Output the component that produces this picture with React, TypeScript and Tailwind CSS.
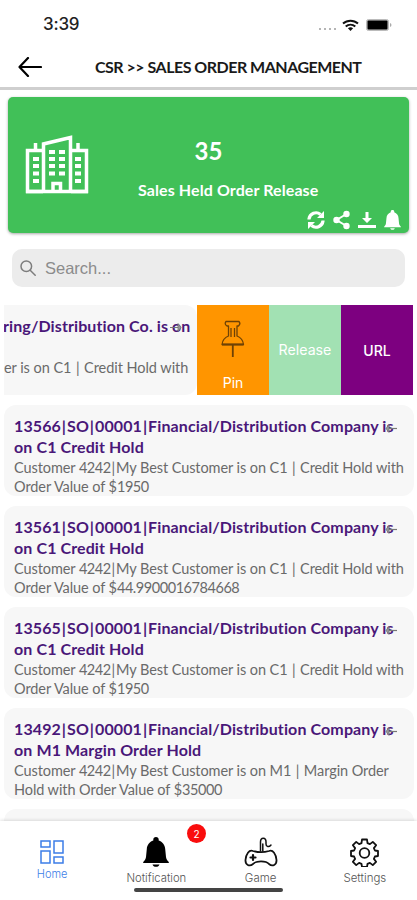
import { Fragment } from "react";

const orders = [
    {
        title: ["13566|SO|00001|Financial/Distribution Company is", "on C1 Credit Hold"],
        detail: ["Customer 4242|My Best Customer is on C1 | Credit Hold with", "Order Value of $1950"],
    },
    {
        title: ["13561|SO|00001|Financial/Distribution Company is", "on C1 Credit Hold"],
        detail: ["Customer 4242|My Best Customer is on C1 | Credit Hold with", "Order Value of $44.9900016784668"],
    },
    {
        title: ["13565|SO|00001|Financial/Distribution Company is", "on C1 Credit Hold"],
        detail: ["Customer 4242|My Best Customer is on C1 | Credit Hold with", "Order Value of $1950"],
    },
    {
        title: ["13492|SO|00001|Financial/Distribution Company is", "on M1 Margin Order Hold"],
        detail: ["Customer 4242|My Best Customer is on M1 | Margin Order", "Hold with Order Value of $35000"],
    },
];

// Pipes get a little air, long numbers are set tighter
function Line({ text }: { text: string }) {
    return (
        <>
            {text.split(/(\||\d[\d.]+)/).map((part, i) => {
                if (part === "|") return <span key={i} className="mx-[0.9px]">|</span>;
                if (/^\d/.test(part)) return <span key={i} className="tracking-[-0.45px]">{part}</span>;
                return <Fragment key={i}>{part}</Fragment>;
            })}
        </>
    );
}

function StatusBar() {
    return (
        <div className="flex h-[46px] shrink-0 items-center justify-between pl-[43px] pr-[25px] pt-[4px]">
            <span className="font-['Inter'] text-[17px] font-medium tracking-[-0.2px] text-[#222]">3:39</span>
            <div className="flex items-center">
                <div className="mr-[6px] mt-[8px] flex gap-[3px]">
                    {[0, 1, 2, 3].map((i) => (
                        <span key={i} className="size-[2px] bg-[#b5b5b5]" />
                    ))}
                </div>
                <svg width="17" height="13" viewBox="0 0 17 13" fill="none" stroke="#111" strokeWidth="2">
                    <path d="M1 4.6C5.3.7 11.7.7 16 4.6" />
                    <path d="M3.7 7.5c2.8-2.5 6.8-2.5 9.6 0" />
                    <path d="M5.9 9.2c1.5-1.3 3.7-1.3 5.2 0L8.5 12Z" fill="#111" stroke="none" />
                </svg>
                <svg className="ml-[7px]" width="26" height="12" viewBox="0 0 26 12">
                    <rect x=".5" y=".5" width="22" height="11" rx="2" fill="#ccc" stroke="#bbb" />
                    <rect x="1.5" y="1.5" width="20" height="9" rx="1" fill="#000" />
                    <path d="M24 4v4q1.5-.5 1.5-2T24 4Z" fill="#aaa" />
                </svg>
            </div>
        </div>
    );
}

function Header() {
    return (
        <header className="flex h-[44px] shrink-0 items-center border-b-[3px] border-[#cfcfcf] pl-[18px]">
            <svg width="24" height="20" viewBox="0 0 24 20" fill="none" stroke="#000" strokeWidth="2.2" strokeLinecap="round" strokeLinejoin="round">
                <path d="M10 1 1.5 10 10 19M1.5 10H23" />
            </svg>
            <h1 className="ml-[53px] pt-px whitespace-nowrap text-[16px] font-bold tracking-[-0.5px] text-[#1a1a1a]">
                CSR &gt;&gt; SALES ORDER MANAGEMENT
            </h1>
        </header>
    );
}

function BuildingIcon() {
    return (
        <svg width="64" height="60" viewBox="0 0 64 60" fill="none" stroke="#fff" strokeWidth="3.5">
            <path d="M18 56.5H2.5V15.5H18M46 15.5H61.5V56.5H46M10.5 15V8M53 15V8" />
            <path d="M18.5 57V9L45.5 2.5V57" />
            <path d="M1 56.5H63" />
            <path d="M28 57v-8.5h7.5V57" />
            <path d="M8 24h6M8 31h6M8 38.5h6M8 46h6M50 24h6M50 31h6M50 38.5h6M50 46h6M24 17h6M34 17h6M24 24h6M34 24h6M24 31h6M34 31h6M24 38.5h6M34 38.5h6" strokeWidth="4" />
        </svg>
    );
}

function SummaryCard() {
    return (
        <section className="relative mx-[8px] mt-[7px] h-[136px] shrink-0 rounded-[5px] bg-[#41c058] text-white shadow-[0_1px_3px_rgba(0,0,0,0.35)]">
            <div className="flex">
                <div className="ml-[17px] mt-[38px]">
                    <BuildingIcon />
                </div>
                <div className="ml-[49px] w-[182px]">
                    <p className="mt-[39px] pr-[41px] text-center text-[24px] leading-[30px] font-bold">35</p>
                    <p className="mt-[13px] whitespace-nowrap text-[16px] leading-[22px] font-bold tracking-[0.1px]">Sales Held Order Release</p>
                </div>
            </div>
            <div className="absolute right-[8px] bottom-[3px] flex items-center gap-[8px]">
                <svg width="18" height="20" viewBox="0 0 18 20" fill="none" stroke="#fff" strokeWidth="3.2">
                    <path d="M2 9.5V9a7 7 0 0 1 11.5-4.5M16 10.5v.5a7 7 0 0 1-11.5 4.5" />
                    <path d="M17 1v7h-7ZM1 19v-7h7Z" fill="#fff" stroke="none" />
                </svg>
                <svg width="17" height="20" viewBox="0 0 17 20" fill="#fff" stroke="#fff" strokeWidth="2">
                    <path d="M13.5 4 3.5 10l10 6" fill="none" />
                    <circle cx="13.5" cy="4" r="2.2" />
                    <circle cx="3.5" cy="10" r="2.2" />
                    <circle cx="13.5" cy="16" r="2.2" />
                </svg>
                <svg width="18" height="20" viewBox="0 0 18 20" fill="#fff">
                    <path d="M7.5 2h3v6H14l-5 5-5-5h3.5ZM0 15h18v3H0Z" />
                </svg>
                <BellIcon className="h-[20px] w-[17px]" />
            </div>
        </section>
    );
}

function BellIcon({ className }: { className: string }) {
    return (
        <svg className={className} viewBox="0 0 26 30" fill="currentColor" preserveAspectRatio="none">
            <path d="M13 0c-1.7 0-2.7 1-2.7 2.5v1C6.5 4.8 4 8 3.8 12l-.8 8c-.2 2-1 3.2-2.8 5v1h25.6v-1c-1.800-1.800-2.600-3-2.800-5l-.8-8c-.2-4-2.700-7.200-6.500-8.500v-1C15.700 1 14.700 0 13 0ZM9.500 27.500h7c-.5 1.700-1.700 2.300-3.500 2.300s-3-.6-3.500-2.300Z" />
        </svg>
    );
}

function SearchBar() {
    return (
        <div className="mx-[12px] mt-[16px] flex h-[38px] shrink-0 items-center rounded-[10px] bg-[#ececec] pl-[8px]">
            <svg width="16" height="16" viewBox="0 0 16 16" fill="none" stroke="#7d7d7d" strokeWidth="1.5" strokeLinecap="round">
                <circle cx="6.3" cy="6.3" r="5.3" />
                <path d="m10.2 10.2 5 5" />
            </svg>
            <span className="ml-[9px] font-['Liberation_Sans'] text-[16.5px] text-[#8b8b8b]">Search...</span>
        </div>
    );
}

function SwipedRow() {
    return (
        <div className="ml-[4px] mt-[18px] flex h-[90px] w-[410px] shrink-0">
            <div className="relative w-[193px] overflow-hidden rounded-r-[12px] bg-[#f7f7f7] whitespace-nowrap">
                <p className="mt-[10px] -ml-px text-[16px] leading-[21px] font-bold tracking-[0.1px] text-[#4a1779]">ring/Distribution Co. is on</p>
                <p className="mt-[22px] text-[14.5px] leading-[19px] tracking-[-0.05px] text-[#6a6a6a]">
                    <Line text="er is on C1 | Credit Hold with" />
                </p>
                <ArrowMark className="absolute top-[17px] right-[13px] -scale-x-100" />
            </div>
            <button className="flex w-[72px] flex-col items-center bg-[#ff9500] pt-[15px] font-['Inter'] text-[14px] leading-[18px] text-white">
                <svg width="24" height="39" viewBox="0 0 24 39" fill="none" stroke="#6e4205" strokeWidth="1.3" strokeLinejoin="round">
                    <path d="M5 1.5h13q2 2.3-.5 4.5H16v10c4 1.5 6 4 6.500 8.500H1C1.500 20 3.500 17.500 7.500 16V6H6q-3-2.200-1-4.500ZM10 8v9M13.500 8v9" />
                    <path d="M1 24.5h21.5M11.8 24.5V37" strokeWidth="1.8" />
                </svg>
                <span className="mt-[15px]">Pin</span>
            </button>
            <button className="w-[72px] bg-[#a2e1b3] font-['Inter'] text-[14.2px] text-white">Release</button>
            <button className="w-[72px] bg-[#7d0080] font-['Inter'] text-[14px] font-medium text-white">URL</button>
        </div>
    );
}

function ArrowMark({ className }: { className: string }) {
    return (
        <svg className={className} width="14" height="11" viewBox="0 0 14 11" fill="none" stroke="#777" strokeWidth="1.2">
            <path d="M14 5.5H3" />
            <path d="M6 1.5v8L3 5.5Z" fill="#999" strokeWidth=".8" />
        </svg>
    );
}

function OrderCard({ title, detail }: { title: string[]; detail: string[] }) {
    return (
        <article className="relative h-[91px] w-[410px] shrink-0 rounded-[12px] bg-[#f7f7f7] pt-[10px] pl-[10px] whitespace-nowrap">
            <h2 className="text-[16px] leading-[21px] font-bold tracking-[0.11px] text-[#4a1779]">
                {title.map((line) => (
                    <span key={line} className="block">
                        {line.split("|").map((part, i) => (
                            <Fragment key={i}>
                                {i > 0 && <span className="mx-[0.9px]">|</span>}
                                {part}
                            </Fragment>
                        ))}
                    </span>
                ))}
            </h2>
            <p className="pt-px text-[14.5px] leading-[19px] tracking-[-0.08px] text-[#6a6a6a]">
                {detail.map((line) => (
                    <span key={line} className="block"><Line text={line} /></span>
                ))}
            </p>
            <ArrowMark className="absolute top-[18px] right-[17px]" />
        </article>
    );
}

function TabBar() {
    return (
        <nav className="relative h-[79px] shrink-0 bg-white font-['Inter'] text-[11.5px] leading-[14px] font-light text-[#555] shadow-[0_-1px_3px_rgba(0,0,0,0.12)]">
            <div className="grid grid-cols-4">
                <div className="flex flex-col items-center pt-[19px] text-[#3c7ee8]">
                    <svg width="24" height="24" viewBox="0 0 24 24" fill="none" stroke="currentColor" strokeWidth="1.5">
                        <path d="M1 1h9v6H1ZM14 1h9v12h-9ZM1 11h9v12H1ZM14 17h9v6h-9Z" />
                    </svg>
                    <span className="mt-[3px] text-[11px]">Home</span>
                </div>
                <div className="flex flex-col items-center pt-[16px]">
                    <BellIcon className="h-[30px] w-[26px] text-black" />
                    <span className="mt-[4px] text-[11.3px]">Notification</span>
                </div>
                <div className="flex flex-col items-center pt-[16px]">
                    <svg width="34" height="31" viewBox="0 0 34 31" fill="none" stroke="#111" strokeWidth="1.8" strokeLinecap="round" strokeLinejoin="round">
                        <path d="M9 14c5 1.5 11 1.5 16 0 4-1.5 7 3 7.5 9 .3 5-4 7-7.5 4-3-3.5-13-3.5-16 0-3.5 3-7.8 1-7.5-4C2 17 5 12.5 9 14Z" />
                        <path d="M9 18v5M6.5 20.5h5" strokeWidth="2.2" />
                        <path d="M16.5 14V5c0-5 5.5-5 5.5 0v2c0 3 3 3.5 5 1M18.8 14V7" strokeWidth="1.5" />
                    </svg>
                    <span className="mt-[3px]">Game</span>
                </div>
                <div className="flex flex-col items-center pt-[17px]">
                    <svg width="29" height="29" viewBox="0 0 29 29" fill="none" stroke="#111" strokeWidth="1.8" strokeLinejoin="round">
                        <path d="M12 1.5h5l.5 3.6 2.4 1 2.9-2.2 3.3 3.3-2.2 2.9 1 2.4 3.1.5v5l-3.1.5-1 2.4 2.2 2.9-3.3 3.3-2.9-2.2-2.4 1-.5 3.1h-5l-.5-3.1-2.4-1-2.9 2.2-3.3-3.3 2.2-2.9-1-2.4L1 18v-5l3.1-.5 1-2.4-2.2-2.9 3.3-3.3 2.9 2.2 2.4-1Z" />
                        <circle cx="14.5" cy="15" r="4.8" />
                    </svg>
                    <span className="mt-[4px]">Settings</span>
                </div>
            </div>
            <span className="absolute top-[3px] left-[187px] flex size-[19px] items-center justify-center rounded-full bg-[#f90d0d] text-[10px] font-normal text-white">2</span>
            <span className="absolute top-[67px] left-[134px] h-[4px] w-[149px] rounded-full bg-[#444]" />
        </nav>
    );
}

export default function App() {
    return (
        <div className="flex h-[900px] w-[417px] flex-col overflow-hidden bg-white font-['Lato',sans-serif]">
            <StatusBar />
            <Header />
            <SummaryCard />
            <SearchBar />
            <main className="min-h-0 flex-1 overflow-hidden">
                <SwipedRow />
                <div className="mt-[10px] ml-[4px] flex flex-col gap-[10px]">
                    {orders.map((order) => (
                        <OrderCard key={order.title[0]} title={order.title} detail={order.detail} />
                    ))}
                    <div className="h-[91px] w-[410px] shrink-0 rounded-[12px] bg-[#f7f7f7]" />
                </div>
            </main>
            <TabBar />
        </div>
    );
}
